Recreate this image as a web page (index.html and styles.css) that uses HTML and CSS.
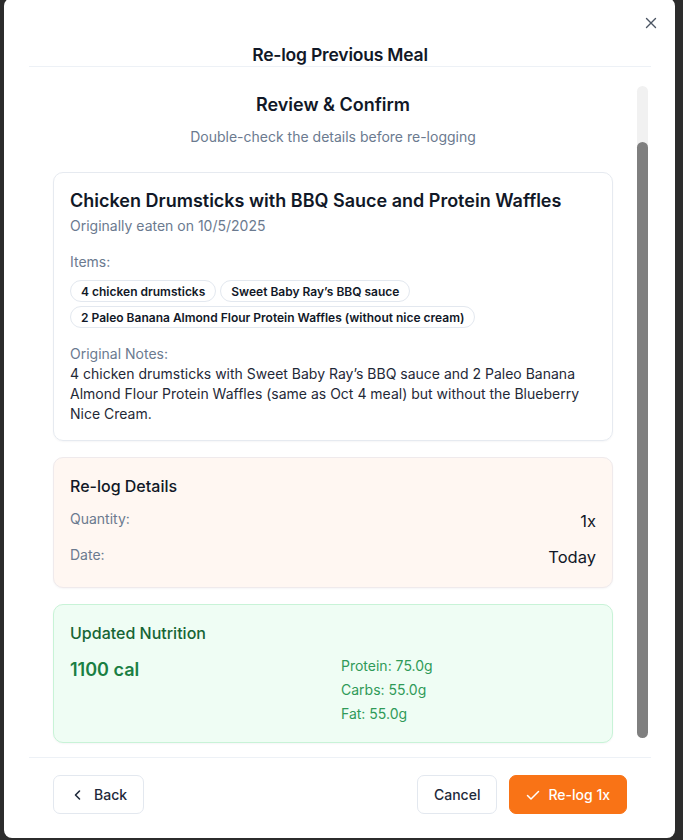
FILE: index.html
```html
<!DOCTYPE html>
<html lang="en">
<head>
<meta charset="utf-8">
<title>Re-log Previous Meal</title>
<link rel="stylesheet" href="styles.css">
</head>
<body>
<div class="modal" role="dialog" aria-labelledby="dlg-title">
  <button class="close" aria-label="Close">
    <svg viewBox="0 0 12 12" width="12" height="12"><path d="M1.5 1.5l9 9M10.5 1.5l-9 9" stroke="currentColor" stroke-width="1.4" stroke-linecap="round" fill="none"/></svg>
  </button>
  <header class="modal-header">
    <h1 id="dlg-title" class="modal-title">Re-log Previous Meal</h1>
  </header>
  <div class="modal-body">
    <div class="scroll-content">
      <h2 class="step-title">Review &amp; Confirm</h2>
      <p class="step-sub">Double-check the details before re-logging</p>

      <section class="card meal-card">
        <h3 class="meal-name">Chicken Drumsticks with BBQ Sauce and Protein Waffles</h3>
        <p class="muted meal-date">Originally eaten on 10/5/2025</p>
        <p class="muted label items-label">Items:</p>
        <div class="chips">
          <span class="chip">4 chicken drumsticks</span>
          <span class="chip">Sweet Baby Ray’s BBQ sauce</span>
          <span class="chip">2 Paleo Banana Almond Flour Protein Waffles (without nice cream)</span>
        </div>
        <p class="muted label notes-label">Original Notes:</p>
        <p class="notes">4 chicken drumsticks with Sweet Baby Ray’s BBQ sauce and 2 Paleo Banana Almond Flour Protein Waffles (same as Oct 4 meal) but without the Blueberry Nice Cream.</p>
      </section>

      <section class="card details-card">
        <h3 class="card-heading">Re-log Details</h3>
        <div class="detail-row">
          <span class="muted">Quantity:</span>
          <span class="detail-value">1x</span>
        </div>
        <div class="detail-row">
          <span class="muted">Date:</span>
          <span class="detail-value">Today</span>
        </div>
      </section>

      <section class="card nutrition-card">
        <h3 class="card-heading green-heading">Updated Nutrition</h3>
        <div class="nutrition-grid">
          <div class="calories">1100 cal</div>
          <ul class="macros">
            <li>Protein: 75.0g</li>
            <li>Carbs: 55.0g</li>
            <li>Fat: 55.0g</li>
          </ul>
        </div>
      </section>
    </div>
    <div class="scrollbar" aria-hidden="true"><div class="scrollbar-thumb"></div></div>
  </div>
  <footer class="modal-footer">
    <button class="btn btn-outline">
      <svg viewBox="0 0 16 16" width="16" height="16"><path d="M9.5 4L5.5 8l4 4" stroke="currentColor" stroke-width="1.6" stroke-linecap="round" stroke-linejoin="round" fill="none"/></svg>
      <span>Back</span>
    </button>
    <div class="footer-right">
      <button class="btn btn-outline">Cancel</button>
      <button class="btn btn-primary">
        <svg viewBox="0 0 14 14" width="14" height="14"><path d="M1.5 7.5l3.5 3.5 7.5-7.5" stroke="currentColor" stroke-width="1.5" stroke-linecap="round" stroke-linejoin="round" fill="none"/></svg>
        <span>Re-log 1x</span>
      </button>
    </div>
  </footer>
</div>
</body>
</html>
```
FILE: styles.css
```css
* { box-sizing: border-box; }

html, body {
  margin: 0;
  padding: 0;
  height: 840px;
  overflow: hidden;
}

body {
  background: #2c2c2c;
  font-family: Inter, "Noto Sans", "Liberation Sans", sans-serif;
  color: #0f172a;
}

h1, h2, h3, p, ul { margin: 0; padding: 0; }

.modal {
  position: relative;
  margin: -2px 0 0 4px;
  width: 671px;
  height: 840px;
  background: #ffffff;
  border-radius: 8px;
  padding: 0 24px 0 25px;
  display: flex;
  flex-direction: column;
}

.close {
  position: absolute;
  top: 19px;
  right: 18px;
  width: 12px;
  height: 12px;
  padding: 0;
  border: 0;
  background: none;
  color: #4b5563;
  display: flex;
}

.modal-header {
  padding-top: 46px;
  border-bottom: 1px solid #edf1f6;
}

.modal-title {
  font-size: 17.5px;
  line-height: 22px;
  font-weight: 600;
  text-align: center;
  letter-spacing: -0.2px;
  color: #111827;
}

.modal-body {
  position: relative;
  flex: 1;
  overflow: hidden;
}

.scroll-content {
  padding: 24px 38px 0 24px;
  display: flex;
  flex-direction: column;
  gap: 16px;
}

.step-title {
  font-size: 18px;
  line-height: 28px;
  font-weight: 600;
  text-align: center;
  color: #111827;
}

.step-sub {
  margin-top: -8px;
  font-size: 14px;
  line-height: 20px;
  text-align: center;
  color: #6b7a8f;
  margin-bottom: 9px;
}

.scrollbar {
  position: absolute;
  top: 19px;
  bottom: 19px;
  right: 3px;
  width: 11px;
  background: #f1f1f1;
  border-radius: 6px;
  display: flex;
  flex-direction: column;
  justify-content: flex-end;
}

.scrollbar-thumb {
  height: 596px;
  background: #7f7f7f;
  border-radius: 6px;
}

.card {
  border: 1px solid #e6eaf0;
  border-radius: 10px;
  padding: 16px;
  box-shadow: 0 1px 2px rgba(15, 23, 42, 0.04);
}

.muted {
  color: #6b7a8f;
  font-size: 14px;
  line-height: 20px;
}

.meal-name {
  font-size: 18px;
  line-height: 24px;
  font-weight: 600;
  color: #111827;
}

.meal-date { margin-top: 3px; }

.items-label { margin-top: 16px; }

.chips {
  margin-top: 8px;
  display: flex;
  flex-wrap: wrap;
  gap: 4px 4px;
}

.chip {
  display: inline-flex;
  align-items: center;
  height: 22px;
  padding: 0 10px;
  border: 1px solid #e3e8ef;
  border-radius: 999px;
  font-size: 12px;
  font-weight: 600;
  color: #111827;
  background: #fff;
}

.notes-label { margin-top: 16px; }

.notes {
  font-size: 14px;
  line-height: 20px;
  color: #1f2937;
}

.details-card {
  background: #fff7f2;
  border-color: #efeaec;
}

.card-heading {
  font-size: 16px;
  line-height: 24px;
  font-weight: 500;
  color: #111827;
  margin-bottom: 9px;
}

.detail-row {
  display: flex;
  justify-content: space-between;
  align-items: flex-start;
  height: 28px;
}

.detail-row + .detail-row { margin-top: 8px; }

.detail-row .muted { line-height: 24px; }

.detail-value {
  font-size: 16.5px;
  line-height: 28px;
  color: #111827;
}

.nutrition-card {
  background: #effdf4;
  border-color: #c8f3d7;
}

.green-heading { color: #166534; }

.nutrition-grid {
  display: grid;
  grid-template-columns: 1fr 1fr;
  column-gap: 16px;
}

.calories {
  font-size: 18px;
  line-height: 32px;
  font-weight: 600;
  color: #1a7f43;
}

.macros {
  list-style: none;
  font-size: 14px;
  line-height: 24px;
  color: #2f9a58;
}

.modal-footer {
  border-top: 1px solid #edf1f6;
  padding: 17px 24px 24px;
  display: flex;
  justify-content: space-between;
  align-items: center;
}

.footer-right {
  display: flex;
  gap: 12px;
}

.btn {
  height: 39px;
  padding: 0 16px;
  border-radius: 7px;
  display: inline-flex;
  align-items: center;
  gap: 8px;
  font-family: inherit;
  font-size: 14px;
  font-weight: 500;
  cursor: pointer;
}

.btn-outline {
  background: #fff;
  border: 1px solid #e3e8ef;
  color: #1e293b;
}

.btn-primary {
  background: #f97316;
  border: 1px solid #f97316;
  color: #fff;
}

.btn svg { flex: none; }
```
